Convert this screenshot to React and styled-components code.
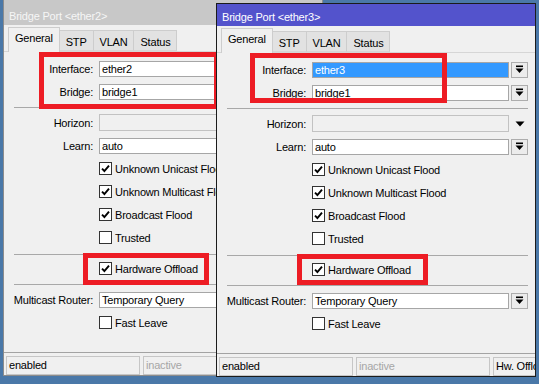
import React from "react";
import styled, { createGlobalStyle } from "styled-components";

const GlobalStyle = createGlobalStyle`
  html, body {
    margin: 0;
    padding: 0;
    background: #4a78a8;
  }
  body {
    font-family: "Liberation Sans", Arial, sans-serif;
    font-size: 11px;
    letter-spacing: -0.2px;
    color: #000;
  }
`;

const Desktop = styled.div`
  position: relative;
  width: 539px;
  height: 384px;
  overflow: hidden;
  background: #4a78a8;
`;

const Window = styled.div`
  position: absolute;
  left: ${(p) => p.$x}px;
  top: ${(p) => p.$y}px;
  width: 320px;
  height: ${(p) => p.$h}px;
  box-sizing: border-box;
  display: flex;
  flex-direction: column;
  overflow: hidden;
  background: #f0f0f0;
  border: 1px solid ${(p) => (p.$active ? "#1b1b1b" : "#8c8c8c")};
  z-index: ${(p) => (p.$active ? 2 : 1)};
`;

const TitleBar = styled.div`
  flex: none;
  height: ${(p) => p.$h}px;
  box-sizing: border-box;
  display: flex;
  align-items: flex-end;
  padding: 0 0 3px 5px;
  line-height: 12px;
  background: ${(p) => (p.$active ? "#5353cc" : "#c8c8c8")};
  color: ${(p) => (p.$active ? "#ffffff" : "#f6f6f6")};
  white-space: nowrap;
`;

const TabStrip = styled.div`
  flex: none;
  height: 27px;
  box-sizing: border-box;
  display: flex;
  align-items: flex-end;
  padding-left: 4px;
  border-bottom: 1px solid #d6d6d6;
`;

const Tab = styled.div`
  height: ${(p) => (p.$selected ? 25 : 21)}px;
  margin-bottom: ${(p) => (p.$selected ? -1 : 0)}px;
  margin-left: ${(p) => (p.$first ? 0 : -1)}px;
  box-sizing: border-box;
  padding: ${(p) => (p.$selected ? 4 : 5)}px 6px 0;
  line-height: 12px;
  border: 1px solid #cdcdcd;
  border-bottom: ${(p) => (p.$selected ? "none" : "1px solid #d6d6d6")};
  background: ${(p) => (p.$selected ? "#f0f0f0" : "#e2e2e2")};
  position: relative;
  z-index: ${(p) => (p.$selected ? 1 : 0)};
  white-space: nowrap;
`;

const Panel = styled.div`
  flex: 1;
  display: flex;
  flex-direction: column;
  padding: 5px 7px 0 0;
  border-bottom: 1px solid #a3a3a3;
`;

const Row = styled.div`
  height: 23px;
  display: flex;
  align-items: center;
`;

const Label = styled.div`
  flex: none;
  width: 89px;
  margin-right: 6px;
  text-align: right;
  white-space: nowrap;
`;

const Field = styled.div`
  flex: 1;
  height: ${(p) => (p.$disabled ? 17 : 16)}px;
  box-sizing: border-box;
  border: 1px solid ${(p) => (p.$disabled ? "#c2c2c2" : "#a6a6a6")};
  background: ${(p) =>
    p.$selected ? "#3399ff" : p.$disabled ? "#f0f0f0" : "#ffffff"};
  color: ${(p) => (p.$selected ? "#fff" : "#000")};
  padding-left: 2px;
  line-height: 14px;
  white-space: nowrap;
  overflow: hidden;
`;

const Side = styled.div`
  flex: none;
  width: 17px;
  height: 16px;
  margin-left: 2px;
  box-sizing: border-box;
  display: flex;
  align-items: center;
  justify-content: center;
  border: ${(p) => (p.$button ? "1px solid #adadad" : "none")};
  background: ${(p) => (p.$button ? "#ececec" : "transparent")};
`;

const CheckRow = styled.div`
  height: 23px;
  display: flex;
  align-items: center;
  gap: 3px;
  padding-left: 95px;
  white-space: nowrap;
`;

const Box = styled.span`
  flex: none;
  width: 13px;
  height: 13px;
  box-sizing: border-box;
  border: 1px solid #333;
  background: #fff;
  display: flex;
  align-items: center;
  justify-content: center;
`;

const Separator = styled.div`
  flex: none;
  height: 1px;
  background: #a8a8a8;
  margin: ${(p) => p.$top}px 0 ${(p) => p.$bottom}px 10px;
`;

const StatusBar = styled.div`
  flex: none;
  height: 22px;
  box-sizing: border-box;
  padding: 3px 0 0 2px;
  display: flex;
  gap: 3px;
`;

const StatusField = styled.div`
  flex: none;
  width: ${(p) => p.$w}px;
  height: 19px;
  box-sizing: border-box;
  border: 1px solid #c6c6c6;
  padding-left: 2px;
  line-height: 17px;
  color: ${(p) => (p.$dim ? "#a6a6a6" : "#000")};
  white-space: nowrap;
  overflow: hidden;
`;

const Callout = styled.div`
  position: absolute;
  left: ${(p) => p.$x}px;
  top: ${(p) => p.$y}px;
  width: ${(p) => p.$w}px;
  height: ${(p) => p.$h}px;
  box-sizing: border-box;
  border: 5px solid #ed1c24;
  pointer-events: none;
  z-index: 3;
`;

const DropIcon = () => (
  <svg width="9" height="9" viewBox="0 0 9 9">
    <rect x="1" y="0.5" width="7" height="1.6" fill="#000" />
    <path d="M0.5 3.5 H8.5 L4.5 8 Z" fill="#000" />
  </svg>
);

const TriIcon = () => (
  <svg width="10" height="6" viewBox="0 0 10 6">
    <path d="M0.5 0.5 H9.5 L5 5.5 Z" fill="#000" />
  </svg>
);

const CheckMark = () => (
  <svg width="11" height="11" viewBox="0 0 11 11">
    <path
      d="M2 5.6 L4.4 8 L9 2.6"
      fill="none"
      stroke="#000"
      strokeWidth="1.9"
    />
  </svg>
);

const Check = ({ checked, children }) => (
  <CheckRow>
    <Box>{checked && <CheckMark />}</Box>
    <span>{children}</span>
  </CheckRow>
);

const tabs = ["General", "STP", "VLAN", "Status"];

const flags = [
  { label: "Unknown Unicast Flood", checked: true },
  { label: "Unknown Multicast Flood", checked: true },
  { label: "Broadcast Flood", checked: true },
  { label: "Trusted", checked: false },
];

const BridgePortWindow = ({ name, active, x, y, h, titleH, callouts }) => (
  <Window $x={x} $y={y} $h={h} $active={active}>
    <TitleBar $h={titleH} $active={active}>
      Bridge Port &lt;{name}&gt;
    </TitleBar>
    <TabStrip>
      {tabs.map((t, i) => (
        <Tab key={t} $selected={i === 0} $first={i === 0}>
          {t}
        </Tab>
      ))}
    </TabStrip>
    <Panel>
      <Row>
        <Label>Interface:</Label>
        <Field $selected={active}>{name}</Field>
        <Side $button>
          <DropIcon />
        </Side>
      </Row>
      <Row>
        <Label>Bridge:</Label>
        <Field>bridge1</Field>
        <Side $button>
          <DropIcon />
        </Side>
      </Row>
      <Separator $top={4} $bottom={3} />
      <Row>
        <Label>Horizon:</Label>
        <Field $disabled />
        <Side>
          <TriIcon />
        </Side>
      </Row>
      <Row>
        <Label>Learn:</Label>
        <Field>auto</Field>
        <Side $button>
          <DropIcon />
        </Side>
      </Row>
      {flags.map((f) => (
        <Check key={f.label} checked={f.checked}>
          {f.label}
        </Check>
      ))}
      <Separator $top={5} $bottom={2} />
      <Check checked>Hardware Offload</Check>
      <Separator $top={4} $bottom={3} />
      <Row>
        <Label>Multicast Router:</Label>
        <Field>Temporary Query</Field>
        <Side $button>
          <DropIcon />
        </Side>
      </Row>
      <Check>Fast Leave</Check>
    </Panel>
    <StatusBar>
      <StatusField $w={134}>enabled</StatusField>
      <StatusField $w={134} $dim>
        inactive
      </StatusField>
      <StatusField $w={100}>Hw. Offload</StatusField>
    </StatusBar>
    {callouts.map((c, i) => (
      <Callout key={i} $x={c.x} $y={c.y} $w={c.w} $h={c.h} />
    ))}
  </Window>
);

const App = () => {
  return (
    <>
      <GlobalStyle />
      <Desktop>
        <BridgePortWindow
          name="ether2"
          x={3}
          y={-1}
          h={377}
          titleH={25}
          callouts={[
            { x: 35, y: 52, w: 180, h: 57 },
            { x: 79, y: 253, w: 126, h: 32 },
          ]}
        />
        <BridgePortWindow
          name="ether3"
          active
          x={216}
          y={3}
          h={374}
          titleH={22}
          callouts={[
            { x: 33, y: 49, w: 197, h: 50 },
            { x: 80, y: 250, w: 131, h: 31 },
          ]}
        />
      </Desktop>
    </>
  );
};

export default App;
